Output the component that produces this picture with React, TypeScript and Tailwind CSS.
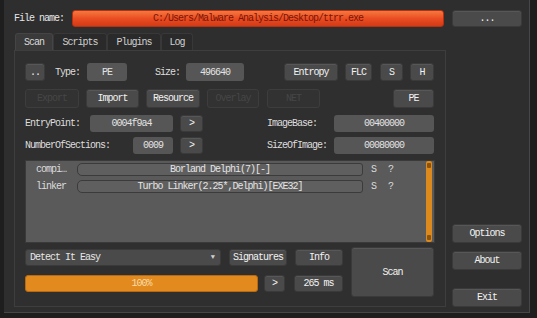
import * as React from "react";

const mono = "font-['Liberation_Mono',monospace] text-[10px] tracking-[-1px]";

interface BtnProps {
  children?: React.ReactNode;
  className?: string;
  disabled?: boolean;
}

// raised grey push button, dark theme
const Btn = ({ children, className = "", disabled = false }: BtnProps) => (
  <div
    className={
      "flex items-center justify-center rounded-[3px] border " +
      (disabled
        ? "border-[#3d3d3d] bg-[#323232] text-[#464646] "
        : "border-[#3a3a3a] bg-[#4a4a4a] text-[#f2f2f2] shadow-[inset_0_1px_0_#575757] ") +
      className
    }
  >
    {children}
  </div>
);

// read-only value field
const Field = ({ children, className = "" }: { children: React.ReactNode; className?: string }) => (
  <div className={"flex items-center justify-center rounded-[3px] bg-[#565656] text-[#e2e2e2] " + className}>
    {children}
  </div>
);

const ResultRow = ({ type, name }: { type: string; name: string }) => (
  <div className="flex h-[12px] items-center pl-[2px]">
    <span className="w-[46px] text-center text-[#dcdcdc]">{type}</span>
    <div className="ml-[3px] flex h-[13px] w-[286px] items-center justify-center rounded-l-[5px] rounded-r-[3px] border border-[#3b3b3b] bg-[#5f5f5f] text-[#e4e4e4]">
      {name}
    </div>
    <span className="ml-[8px] text-[#dcdcdc]">S</span>
    <span className="ml-[12px] text-[#dcdcdc]">?</span>
  </div>
);

export default function App() {
  const tabs = [
    { label: "Scan", w: "w-[38px]", active: true },
    { label: "Scripts", w: "w-[54px]", active: false },
    { label: "Plugins", w: "w-[54px]", active: false },
    { label: "Log", w: "w-[32px]", active: false },
  ];

  return (
    <div className={"h-[318px] w-[537px] overflow-hidden bg-[#1e1e1e] " + mono}>
      <div className="ml-[4px] h-[313px] w-[526px] border-r border-b border-[#474747] bg-[#2e2e2e] pl-[10px] pt-[10px]">
        {/* File name row */}
        <div className="flex h-[17px] items-center">
          <span className="w-[58px] text-[#e6e6e6]">File name:</span>
          <div className="flex h-[17px] w-[372px] items-center justify-center rounded-[3px] border border-[#b8300f] bg-gradient-to-b from-[#f5773f] via-[#ea4d22] to-[#d23a16] text-[#7c1406]">
            C:/Users/Malware Analysis/Desktop/ttrr.exe
          </div>
          <Btn className="ml-[8px] h-[17px] w-[70px] text-[#a8a8a8]">...</Btn>
        </div>

        <div className="mt-[6px] flex">
          {/* Tab widget */}
          <div className="w-[432px]">
            <div className="flex h-[17px] pl-[1px]">
              {tabs.map((t) => (
                <div
                  key={t.label}
                  className={
                    t.w +
                    " flex items-center justify-center rounded-t-[3px] border border-b-0 " +
                    (t.active
                      ? "border-[#454545] bg-[#3a3a3a] text-[#d8d8d8]"
                      : "border-[#383838] bg-[#2a2a2a] text-[#cfcfcf]")
                  }
                >
                  {t.label}
                </div>
              ))}
            </div>
            <div className="h-[257px] border border-[#3e3e3e] bg-[#2f2f2f] pl-[10px] pr-[10px] pt-[12px]">
              {/* Row 1 */}
              <div className="flex h-[18px] items-center">
                <Btn className="h-[18px] w-[20px] text-[#aaaaaa]">..</Btn>
                <span className="ml-[10px] w-[32px] text-[#dddddd]">Type:</span>
                <Field className="h-[18px] w-[40px]">PE</Field>
                <span className="ml-[28px] w-[31px] text-[#dddddd]">Size:</span>
                <Field className="h-[18px] w-[58px]">496640</Field>
                <Btn className="ml-[40px] h-[18px] w-[54px]">Entropy</Btn>
                <Btn className="ml-[7px] h-[18px] w-[27px]">FLC</Btn>
                <Btn className="ml-[8px] h-[18px] w-[23px]">S</Btn>
                <Btn className="ml-[7px] h-[18px] w-[24px]">H</Btn>
              </div>

              {/* Row 2 */}
              <div className="mt-[8px] flex h-[19px] items-center">
                <Btn disabled className="h-[19px] w-[54px]">Export</Btn>
                <Btn className="ml-[7px] h-[19px] w-[53px]">Import</Btn>
                <Btn className="ml-[7px] h-[19px] w-[54px]">Resource</Btn>
                <Btn disabled className="ml-[7px] h-[19px] w-[52px]">Overlay</Btn>
                <Btn disabled className="ml-[8px] h-[19px] w-[53px]">NET</Btn>
                <Btn className="ml-[73px] h-[19px] w-[41px]">PE</Btn>
              </div>

              {/* Row 3 */}
              <div className="mt-[7px] flex h-[17px] items-center">
                <span className="w-[65px] text-[#dddddd]">EntryPoint:</span>
                <Field className="h-[17px] w-[83px]">0004f9a4</Field>
                <Btn className="ml-[7px] h-[17px] w-[23px] text-[#d0d0d0]">&gt;</Btn>
                <span className="ml-[64px] w-[67px] text-[#dddddd]">ImageBase:</span>
                <Field className="h-[17px] w-[100px]">00400000</Field>
              </div>

              {/* Row 4 */}
              <div className="mt-[5px] flex h-[17px] items-center">
                <span className="w-[108px] text-[#dddddd]">NumberOfSections:</span>
                <Field className="h-[17px] w-[40px]">0009</Field>
                <Btn className="ml-[7px] h-[17px] w-[23px] text-[#d0d0d0]">&gt;</Btn>
                <span className="ml-[64px] w-[67px] text-[#dddddd]">SizeOfImage:</span>
                <Field className="h-[17px] w-[100px]">00080000</Field>
              </div>

              {/* Results list */}
              <div className="mt-[6px] flex h-[83px] w-[410px] border border-[#3a3a3a] bg-[#5a5a5a]">
                <div className="flex flex-1 flex-col gap-[5px] pt-[2px]">
                  <ResultRow type="compi…" name="Borland Delphi(7)[-]" />
                  <ResultRow type="linker" name="Turbo Linker(2.25*,Delphi)[EXE32]" />
                </div>
                <div className="mr-[2px] flex w-[6px] flex-col justify-between rounded-[2px] bg-[#dc8a1e]">
                  <div className="mx-auto mt-[2px] h-[5px] w-[4px] rounded-[1px] bg-[#8a5410]" />
                  <div className="mx-auto mb-[2px] h-[5px] w-[4px] rounded-[1px] bg-[#8a5410]" />
                </div>
              </div>

              {/* Bottom controls */}
              <div className="mt-[4px] flex">
                <div className="flex w-[318px] flex-col pt-[2px]">
                  <div className="flex h-[17px] items-center">
                    <div className="flex h-[17px] w-[196px] items-center justify-between rounded-[3px] border border-[#3a3a3a] bg-[#4a4a4a] pl-[4px] pr-[6px] text-[#e6e6e6]">
                      <span>Detect It Easy</span>
                      <span className="text-[7px] text-[#cfcfcf]">▼</span>
                    </div>
                    <Btn className="ml-[8px] h-[17px] w-[58px]">Signatures</Btn>
                    <Btn className="ml-[8px] h-[17px] w-[48px]">Info</Btn>
                  </div>
                  <div className="mt-[9px] flex h-[17px] items-center">
                    <div className="flex h-[17px] w-[233px] items-center justify-center rounded-[3px] border border-[#b86a12] bg-[#e38a1f] text-[#f8dca8]">
                      100%
                    </div>
                    <Btn className="ml-[6px] h-[17px] w-[21px] text-[#d0d0d0]">&gt;</Btn>
                    <Btn className="ml-[9px] h-[17px] w-[49px] text-[#e0e0e0]">265 ms</Btn>
                  </div>
                </div>
                <Btn className="ml-[8px] h-[50px] w-[83px]">Scan</Btn>
              </div>
            </div>
          </div>

          {/* Right column */}
          <div className="ml-[6px] flex w-[70px] flex-col pt-[191px]">
            <Btn className="h-[19px] w-[70px]">Options</Btn>
            <Btn className="mt-[8px] h-[19px] w-[70px]">About</Btn>
            <Btn className="mt-[18px] h-[19px] w-[70px]">Exit</Btn>
          </div>
        </div>
      </div>
    </div>
  );
}
